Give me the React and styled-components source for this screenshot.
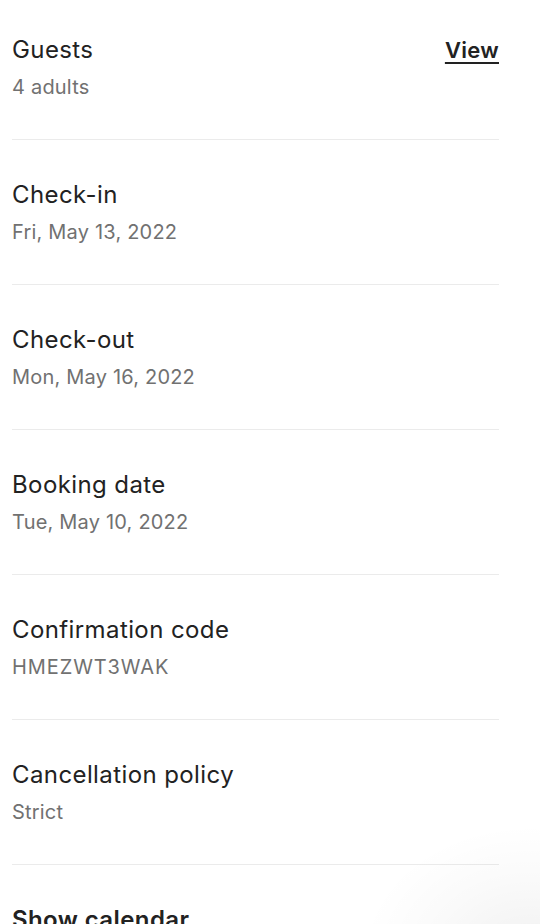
import styled, { createGlobalStyle } from "styled-components"

const GlobalStyle = createGlobalStyle`
  html, body {
    margin: 0;
    padding: 0;
    background: #ffffff;
    overflow: hidden;
  }
  body {
    font-family: Inter, "Noto Sans", "Liberation Sans", sans-serif;
    color: #222222;
    -webkit-font-smoothing: antialiased;
  }
`

const Page = styled.div`
  position: relative;
  width: 540px;
  height: 924px;
  overflow: hidden;
  padding: 0 41px 0 12px;
  box-sizing: border-box;
`

const List = styled.div`
  display: flex;
  flex-direction: column;
`

const Section = styled.div`
  display: flex;
  justify-content: space-between;
  align-items: flex-start;
  padding: ${(p) => (p.$first ? "36px" : "41px")} 0 39px;
  border-bottom: ${(p) => (p.$last ? "none" : "1px solid #ebebeb")};
`

const Info = styled.div`
  display: flex;
  flex-direction: column;
  gap: 10px;
`

const Title = styled.div`
  font-size: 24px;
  line-height: 28px;
  letter-spacing: 0.4px;
  font-weight: ${(p) => (p.$bold ? 600 : 400)};
  color: #222222;
`

const Value = styled.div`
  font-size: 20px;
  line-height: 26px;
  letter-spacing: ${(p) => (p.$code ? "0.9px" : "0.2px")};
  color: #717171;
`

const ViewLink = styled.a`
  font-size: 22px;
  line-height: 28px;
  font-weight: 600;
  letter-spacing: 0.3px;
  color: #222222;
  text-decoration: underline;
  text-underline-offset: 4px;
  text-decoration-thickness: 2px;
  cursor: pointer;
`

// soft shadow from a floating control just below the fold
const CornerShadow = styled.div`
  position: absolute;
  right: -160px;
  bottom: -170px;
  width: 340px;
  height: 270px;
  border-radius: 50%;
  background: radial-gradient(
    closest-side,
    rgba(0, 0, 0, 0.06),
    rgba(0, 0, 0, 0.02) 60%,
    rgba(0, 0, 0, 0)
  );
  pointer-events: none;
`

const details = [
  { label: "Guests", value: "4 adults", action: "View" },
  { label: "Check-in", value: "Fri, May 13, 2022" },
  { label: "Check-out", value: "Mon, May 16, 2022" },
  { label: "Booking date", value: "Tue, May 10, 2022" },
  { label: "Confirmation code", value: "HMEZWT3WAK", code: true },
  { label: "Cancellation policy", value: "Strict" },
]

export default function App() {
  return (
    <>
      <GlobalStyle />
      <Page>
        <List>
          {details.map((item, i) => (
            <Section key={item.label} $first={i === 0}>
              <Info>
                <Title>{item.label}</Title>
                <Value $code={item.code}>{item.value}</Value>
              </Info>
              {item.action && <ViewLink>{item.action}</ViewLink>}
            </Section>
          ))}
          <Section $last>
            <Title $bold>Show calendar</Title>
          </Section>
        </List>
        <CornerShadow />
      </Page>
    </>
  )
}
